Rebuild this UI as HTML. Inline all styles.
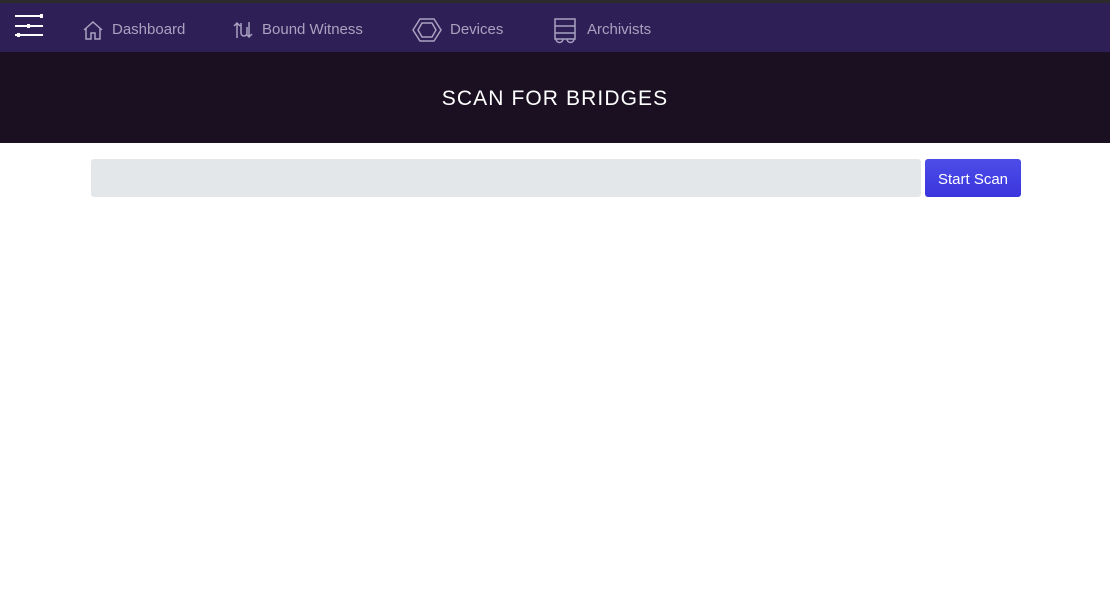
<!DOCTYPE html>
<html><head><meta charset="utf-8">
<style>
*{margin:0;padding:0;box-sizing:border-box}
body{width:1110px;height:610px;background:#fff;font-family:"Liberation Sans",sans-serif;overflow:hidden;position:relative}
.top{position:absolute;left:0;top:0;width:1110px;height:3px;background:#2b2b2b}
.nav{position:absolute;left:0;top:3px;width:1110px;height:49px;background:#2e1f56}
.nav .it{position:absolute;top:2px;height:49px;display:flex;align-items:center;color:#a9a2c0;font-size:15px}
.nav svg{stroke:#a9a2c0;fill:none;stroke-width:1.5}
.hdr{position:absolute;left:0;top:52px;width:1110px;height:91px;background:#1a1022;color:#fff;font-size:21px;letter-spacing:1.1px;text-align:center;line-height:93px}
.inp{position:absolute;left:91px;top:159px;width:830px;height:38px;background:#e4e7ea;border-radius:3px}
.btn{position:absolute;left:925px;top:159px;width:96px;height:38px;background:linear-gradient(#4d4de8,#3a35dd);border-radius:3px;color:#fff;font-size:15px;text-align:center;line-height:41px}
</style></head><body>
<div class="top"></div>
<div class="nav">
 <svg style="position:absolute;left:14px;top:11px;stroke:#fff" width="30" height="26" viewBox="0 0 30 26">
  <line x1="1" y1="2" x2="29" y2="2" stroke="#fff" stroke-width="2"/>
  <line x1="1" y1="12" x2="29" y2="12" stroke="#fff" stroke-width="2"/>
  <line x1="1" y1="21" x2="29" y2="21" stroke="#fff" stroke-width="2"/>
  <rect x="26" y="0" width="3" height="4" fill="#fff" stroke="none"/>
  <rect x="13" y="10" width="3" height="4" fill="#fff" stroke="none"/>
  <rect x="3" y="19" width="3" height="4" fill="#fff" stroke="none"/>
 </svg>
 <div class="it" style="left:82px">
  <svg width="22" height="22" viewBox="0 0 22 22"><path d="M2 11 L11 3 L20 11 M4 9 V20 H9 V14 H13 V20 H18 V9"/></svg>
  <span style="margin-left:8px">Dashboard</span></div>
 <div class="it" style="left:232px">
  <svg width="22" height="22" viewBox="0 0 22 22"><path d="M5 19 V4 M2 7 L5 4 L8 7 M9 4 V14 a3 3 0 0 0 6 0 V8 M17 3 V18 M14 15 L17 18 L20 15"/></svg>
  <span style="margin-left:8px">Bound Witness</span></div>
 <div class="it" style="left:412px">
  <svg width="30" height="26" viewBox="0 0 30 26"><path d="M8 2 H22 L29 13 L22 24 H8 L1 13 Z M10 6 H20 L24 13 L20 20 H10 L6 13 Z"/></svg>
  <span style="margin-left:8px">Devices</span></div>
 <div class="it" style="left:551px">
  <svg width="28" height="28" viewBox="0 0 28 28"><path d="M4 3 H24 V23 H4 Z M4 10 H24 M4 17 H24 M5 23 a3 3 0 0 0 7 0 M16 23 a3 3 0 0 0 7 0"/></svg>
  <span style="margin-left:8px">Archivists</span></div>
</div>
<div class="hdr">SCAN FOR BRIDGES</div>
<div class="inp"></div>
<div class="btn">Start Scan</div>
</body></html>
